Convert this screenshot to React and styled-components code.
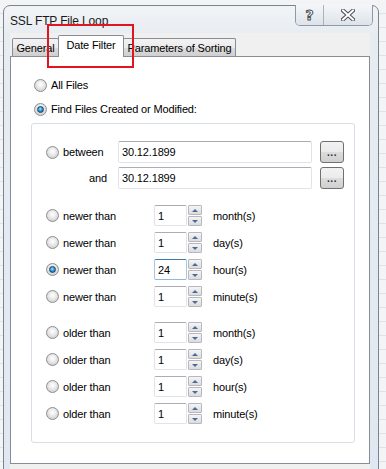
import React from 'react';
import styled, { createGlobalStyle, css } from 'styled-components';

const newerRows = [
  { value: '1', unit: 'month(s)' },
  { value: '1', unit: 'day(s)' },
  { value: '24', unit: 'hour(s)', checked: true, focused: true },
  { value: '1', unit: 'minute(s)' },
];

const olderRows = [
  { value: '1', unit: 'month(s)' },
  { value: '1', unit: 'day(s)' },
  { value: '1', unit: 'hour(s)' },
  { value: '1', unit: 'minute(s)' },
];

const tabs = [
  { label: 'General', width: 47 },
  { label: 'Date Filter', width: 66, active: true },
  { label: 'Parameters of Sorting', width: 113 },
];

const SpinRow = ({ label, value, unit, checked, focused, top }) => (
  <Row $top={top}>
    <LabelCell $w={108}>
      <Radio $checked={checked} />
      <span>{label}</span>
    </LabelCell>
    <SpinInput $focused={focused}>{value}</SpinInput>
    <Spinner>
      <SpinButton>
        <Arrow $up />
      </SpinButton>
      <SpinButton>
        <Arrow />
      </SpinButton>
    </Spinner>
    <Unit>{unit}</Unit>
  </Row>
);

const App = () => {
  return (
    <Screen>
      <GlobalStyle />
      <Dialog>
        <TitleBar>
          <Title>SSL FTP File Loop</Title>
          <CaptionButtons>
            <CaptionButton $w={27}>
              <HelpGlyph>?</HelpGlyph>
            </CaptionButton>
            <CaptionButton $w={48} $last>
              <svg width="14" height="12" viewBox="0 0 14 12">
                <path d="M2 1.5 L12 10.5 M12 1.5 L2 10.5" stroke="#4b4f55" strokeWidth="4" strokeLinecap="square" />
                <path d="M2 1.5 L12 10.5 M12 1.5 L2 10.5" stroke="#ffffff" strokeWidth="2" strokeLinecap="square" />
              </svg>
            </CaptionButton>
          </CaptionButtons>
        </TitleBar>
        <Client>
          <TabStrip>
            {tabs.map((tab, idx) => (
              <Tab key={idx} $w={tab.width} $active={tab.active} $first={idx === 0}>
                {tab.label}
              </Tab>
            ))}
          </TabStrip>
          <Panel>
            <MainOption>
              <Radio />
              <span>All Files</span>
            </MainOption>
            <MainOption $top={8}>
              <Radio $checked />
              <span>Find Files Created or Modified:</span>
            </MainOption>
            <Group>
              <Row $h={22}>
                <LabelCell $w={72}>
                  <Radio />
                  <span>between</span>
                </LabelCell>
                <DateInput>30.12.1899</DateInput>
                <DotsButton>...</DotsButton>
              </Row>
              <Row $h={22} $top={4}>
                <AndLabel>and</AndLabel>
                <DateInput>30.12.1899</DateInput>
                <DotsButton>...</DotsButton>
              </Row>
              {newerRows.map((item, idx) => (
                <SpinRow key={idx} label="newer than" top={idx === 0 ? 16 : 6} {...item} />
              ))}
              {olderRows.map((item, idx) => (
                <SpinRow key={idx} label="older than" top={idx === 0 ? 15 : 6} {...item} />
              ))}
            </Group>
          </Panel>
        </Client>
      </Dialog>
      <Highlight />
    </Screen>
  );
};

export default App;

const GlobalStyle = createGlobalStyle`
  html, body {
    margin: 0;
    padding: 0;
    background: #eceff2;
  }
  body {
    font-family: "Liberation Sans", Arial, sans-serif;
    font-size: 11px;
    letter-spacing: -0.15px;
    color: #000;
  }
`;

const Screen = styled.div`
  position: relative;
  width: 386px;
  height: 469px;
  overflow: hidden;
  background:
    repeating-linear-gradient(180deg, #f3f4f5 0, #f3f4f5 13px, #dfe2e6 13px, #dfe2e6 14px);
`;

const Dialog = styled.div`
  margin: 5px 0 0 3px;
  width: 376px;
  height: 480px;
  box-sizing: border-box;
  border: 1px solid #7b838e;
  border-radius: 7px 7px 0 0;
  background: linear-gradient(180deg, #f1f4f7 0, #e7ecf1 30px, #dfe8f2 100%);
  display: flex;
  flex-direction: column;
`;

const TitleBar = styled.div`
  height: 27px;
  display: flex;
  align-items: flex-start;
  padding-left: 6px;
  flex: none;
`;

const Title = styled.div`
  margin-top: 8px;
  font-size: 12px;
  color: #1a1a1a;
`;

const CaptionButtons = styled.div`
  margin-left: auto;
  margin-right: 5px;
  margin-top: -1px;
  display: flex;
  height: 20px;
  border: 1px solid #8f99a5;
  border-top: none;
  border-radius: 0 0 5px 5px;
  overflow: hidden;
`;

const CaptionButton = styled.div`
  width: ${({ $w }) => $w}px;
  height: 100%;
  display: flex;
  align-items: center;
  justify-content: center;
  background: linear-gradient(180deg, #f4f6f9 0, #e9edf2 50%, #dde3ea 100%);
  border-right: ${({ $last }) => ($last ? 'none' : '1px solid #a9b2bd')};
`;

const HelpGlyph = styled.span`
  font-family: "DejaVu Sans", sans-serif;
  font-weight: bold;
  font-size: 14px;
  color: #fff;
  -webkit-text-stroke: 1px #4b4f55;
  line-height: 1;
`;

const Client = styled.div`
  margin-left: 6px;
  width: 360px;
  flex: 1;
  background: #f0f0f0;
  padding-top: 3px;
`;

const TabStrip = styled.div`
  display: flex;
  align-items: flex-end;
  height: 20px;
  padding-left: 2px;
  position: relative;
  z-index: 1;
`;

const Tab = styled.div`
  box-sizing: border-box;
  width: ${({ $w }) => $w}px;
  height: 18px;
  margin-left: ${({ $first }) => ($first ? 0 : -1)}px;
  display: flex;
  align-items: center;
  justify-content: center;
  border: 1px solid #898c95;
  border-bottom: none;
  border-radius: 2px 2px 0 0;
  background: linear-gradient(180deg, #f3f3f3 0, #ebebeb 50%, #dddddd 51%, #cfcfcf 100%);
  color: #000;
  white-space: nowrap;
  ${({ $active }) =>
    $active &&
    css`
      height: 22px;
      margin-bottom: -1px;
      padding-bottom: 3px;
      background: #fff;
      position: relative;
      z-index: 2;
    `}
`;

const Panel = styled.div`
  box-sizing: border-box;
  height: 408px;
  border: 1px solid #898c95;
  background: #fff;
  padding: 20px 0 0 20px;
`;

const MainOption = styled.div`
  display: flex;
  align-items: center;
  gap: 4px;
  height: 16px;
  padding-left: 3px;
  margin-top: ${({ $top }) => $top || 0}px;
`;

const Radio = styled.span`
  position: relative;
  flex: none;
  width: 13px;
  height: 13px;
  box-sizing: border-box;
  border-radius: 50%;
  border: 1px solid #8c8e90;
  background: radial-gradient(circle at 50% 40%, #ffffff 0, #f1f1f1 30%, #d6d6d6 70%, #c9c9c9 100%);
  ${({ $checked }) =>
    $checked &&
    css`
      &::after {
        content: '';
        position: absolute;
        left: 2px;
        top: 2px;
        width: 7px;
        height: 7px;
        box-sizing: border-box;
        border-radius: 50%;
        border: 1px solid #19446d;
        background: radial-gradient(circle at 45% 40%, #a6e4ff 0, #3a98d6 45%, #0d4f8a 100%);
      }
    `}
`;

const Group = styled.div`
  margin-top: 6px;
  width: 324px;
  box-sizing: border-box;
  border: 1px solid #d5dfe5;
  border-radius: 3px;
  padding: 17px 0 18px 14px;
`;

const Row = styled.div`
  display: flex;
  align-items: center;
  height: ${({ $h }) => $h || 21}px;
  margin-top: ${({ $top }) => $top || 0}px;
`;

const LabelCell = styled.div`
  display: flex;
  align-items: center;
  gap: 4px;
  width: ${({ $w }) => $w}px;
  flex: none;
`;

const AndLabel = styled.div`
  width: 72px;
  box-sizing: border-box;
  padding-left: 43px;
  flex: none;
`;

const textBox = css`
  box-sizing: border-box;
  height: 100%;
  display: flex;
  align-items: center;
  padding-left: 3px;
  border: 1px solid #e2e3ea;
  border-top-color: #abadb3;
  border-radius: 2px;
  background: #fff;
`;

const DateInput = styled.div`
  ${textBox};
  width: 194px;
`;

const SpinInput = styled.div`
  ${textBox};
  width: 33px;
  ${({ $focused }) =>
    $focused &&
    css`
      border-color: #a6c8e4;
      border-top-color: #3d7bad;
      border-bottom-color: #8eb8dc;
    `}
`;

const DotsButton = styled.div`
  margin-left: 8px;
  width: 24px;
  height: 100%;
  box-sizing: border-box;
  border: 1px solid #707070;
  border-radius: 3px;
  background: linear-gradient(180deg, #f2f2f2 0, #ebebeb 50%, #dddddd 51%, #cfcfcf 100%);
  display: flex;
  align-items: flex-end;
  justify-content: center;
  padding-bottom: 4px;
  font-size: 10px;
  font-weight: bold;
  line-height: 1;
  letter-spacing: 0.5px;
  color: #2d2d4a;
`;

const Spinner = styled.div`
  margin-left: 1px;
  width: 14px;
  height: 100%;
  display: flex;
  flex-direction: column;
  gap: 1px;
`;

const SpinButton = styled.div`
  flex: 1;
  box-sizing: border-box;
  border: 1px solid #b5b9bf;
  border-radius: 1px;
  background: linear-gradient(180deg, #f5f5f5 0, #e8e8e8 50%, #dcdcdc 100%);
  display: flex;
  align-items: center;
  justify-content: center;
`;

const Arrow = styled.span`
  width: 0;
  height: 0;
  border-left: 3px solid transparent;
  border-right: 3px solid transparent;
  ${({ $up }) =>
    $up
      ? css`
          border-bottom: 3px solid #4d6a96;
        `
      : css`
          border-top: 3px solid #4d6a96;
        `}
`;

const Unit = styled.div`
  margin-left: 11px;
`;

const Highlight = styled.div`
  position: absolute;
  left: 47px;
  top: 24px;
  width: 87px;
  height: 44px;
  box-sizing: border-box;
  border: 2px solid #e0161e;
  z-index: 10;
`;
